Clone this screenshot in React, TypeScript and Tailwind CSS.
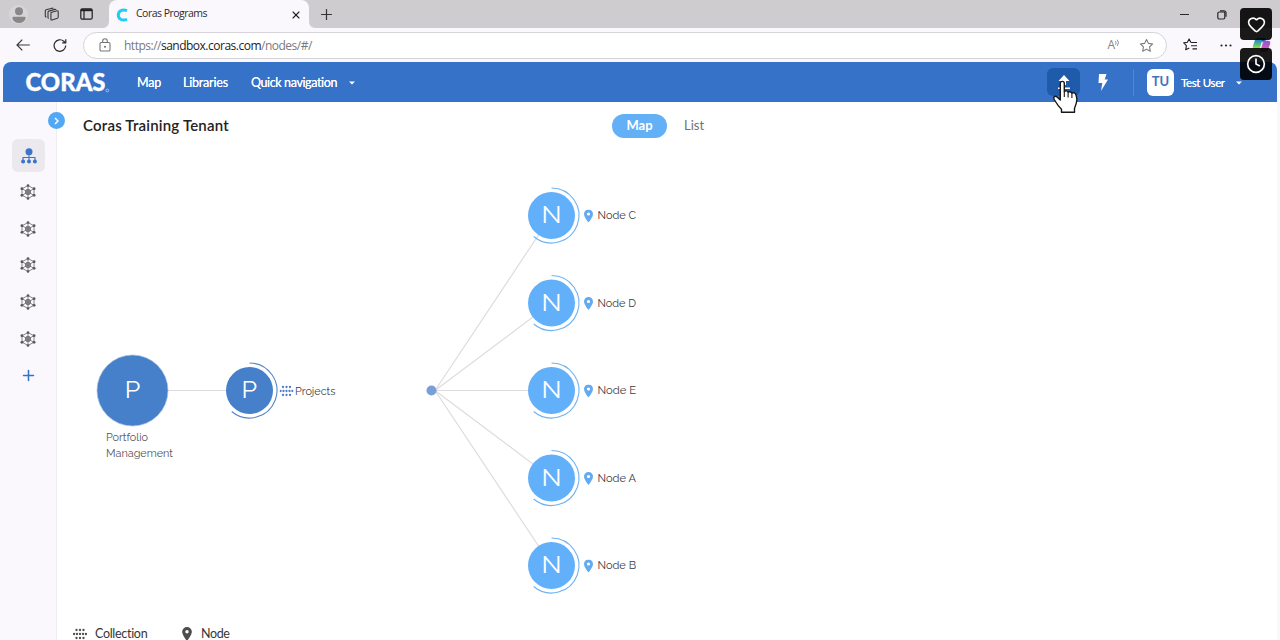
import React from 'react';
import { Clock, Heart, Plus, X } from 'lucide-react';

const children = [
  { name: 'Node C', y: 66.5 },
  { name: 'Node D', y: 154 },
  { name: 'Node E', y: 241.5 },
  { name: 'Node A', y: 329 },
  { name: 'Node B', y: 416.5 },
];

const CollectionIcon: React.FC<{ x?: number; y?: number; size?: number; color: string }> = ({ x, y, size = 14, color }) => {
  const dots = [
    [1.1, 7], [12.9, 7],
    [3.5, 3], [7, 3], [10.5, 3],
    [4, 7], [7, 7], [10, 7],
    [3.5, 11], [7, 11], [10.5, 11],
  ];
  return (
    <svg x={x} y={y} width={size} height={size} viewBox="0 0 14 14" fill={color}>
      {dots.map(([cx, cy]) => (
        <circle key={`${cx}-${cy}`} cx={cx} cy={cy} r="1.15" />
      ))}
    </svg>
  );
};

const PinIcon: React.FC<{ x?: number; y?: number; width?: number; height?: number; color: string }> = ({ x, y, width = 9, height = 13, color }) => (
  <svg x={x} y={y} width={width} height={height} viewBox="0 0 9 13">
    <path fillRule="evenodd" fill={color} d="M4.5 0A4.5 4.5 0 0 0 0 4.5C0 7.6 4.5 13 4.5 13S9 7.6 9 4.5A4.5 4.5 0 0 0 4.5 0Zm0 2.9a1.6 1.6 0 1 1 0 3.2 1.6 1.6 0 0 1 0-3.2Z" />
  </svg>
);

const NetworkIcon = () => (
  <svg width="16" height="16" viewBox="0 0 16 16" fill="none" stroke="#6a686d" strokeWidth="0.8">
    <path d="M8 1.6 14 4.7v6.6L8 14.4 2 11.3V4.7ZM8 1.6v12.8M2 4.7l12 6.6M14 4.7 2 11.3" />
    <circle cx="8" cy="8" r="2.7" fill="#8b898e" />
    <path d="M6.7 7.1h2.6M6.7 8.8h2.6" />
    <g fill="#58565b" stroke="none">
      <circle cx="8" cy="1.5" r="1.3" />
      <circle cx="8" cy="14.5" r="1.3" />
      <circle cx="1.9" cy="4.7" r="1.4" />
      <circle cx="14.1" cy="4.7" r="1.4" />
      <circle cx="1.9" cy="11.3" r="1.4" />
      <circle cx="14.1" cy="11.3" r="1.4" />
    </g>
  </svg>
);

const Caret = () => (
  <svg className="mt-[2px]" width="6" height="4" viewBox="0 0 6 4" fill="#fff">
    <path d="M0 0.5h6L3 3.5Z" />
  </svg>
);

const TabStrip = () => (
  <div className="flex h-7 items-center bg-[#cfcccf]">
    <div className="mt-px ml-[9px] flex h-[19px] w-[19px] items-center justify-center rounded-full bg-[#d8d5d8]">
      <svg width="14" height="16" viewBox="0 0 14 16" fill="#8a8789">
        <circle cx="7" cy="4.3" r="4" />
        <path d="M1.5 9.7h11c1 0 1.3.8 1 1.8C12.8 14.3 10.2 16 7 16S1.2 14.3.5 11.5c-.3-1 0-1.8 1-1.8Z" />
      </svg>
    </div>
    <svg className="mt-px ml-4" width="16" height="16" viewBox="0 0 16 16" fill="none" stroke="#3a383a" strokeWidth="1.1" strokeLinejoin="round">
      <path d="m7 5.5 6.2-1.7c.6-.1 1 .2 1 .7V10c0 .6-.3 1-.8 1.2L7.9 13c-.6.2-1-.1-1-.7Z" />
      <path d="M4.8 11.3c-.5.1-.8-.2-.8-.7V5.2c0-.6.3-1 .8-1.1L11 2.4c.5-.1.8 0 .9.6" />
      <path d="M2.5 9.8c-.7.2-1.2-.1-1.2-.8V3.9c0-.6.3-1 .8-1.1L8 1.2c.6-.1 1 0 1.1.6" />
    </svg>
    <svg className="ml-[20px]" width="13" height="12" viewBox="0 0 13 12" fill="none" stroke="#1f1d1f" strokeWidth="1.2">
      <rect x="0.8" y="0.8" width="11.4" height="10.4" rx="1.5" />
      <path d="M1 2.2h11" strokeWidth="2" />
      <path d="M4 3v8" />
    </svg>
    <div className="relative ml-4 flex h-7 w-[200px] items-center rounded-t-lg bg-[#faf8fc] pl-[7px] pr-[7px]">
      <svg className="absolute bottom-0 -left-[6px]" width="6" height="6" fill="#faf8fc"><path d="M6 0v6H0A6 6 0 0 0 6 0Z" /></svg>
      <svg className="absolute bottom-0 -right-[6px]" width="6" height="6" fill="#faf8fc"><path d="M0 0v6h6A6 6 0 0 1 0 0Z" /></svg>
      <svg className="mt-px" width="13" height="14" viewBox="0 0 13 14" fill="none" stroke="#1fcdf5" strokeWidth="3">
        <path d="M11 2.6C5.5.7 2.3 3.4 2.3 7s3.2 6.3 8.7 4.4" />
      </svg>
      <span className="ml-[7px] flex-1 whitespace-nowrap text-[10.5px] tracking-[-0.52px] text-[#2d2b2d]">Coras Programs</span>
      <X className="mt-px" size={12} strokeWidth={2.2} color="#222" />
    </div>
    <Plus className="ml-[9px]" size={17} strokeWidth={1.7} color="#333" />
    <div className="ml-auto flex items-center pr-[53px]">
      <div className="mt-px h-px w-[9px] bg-[#2a282a]" />
      <svg className="mt-px ml-[28px]" width="10" height="10" viewBox="0 0 10 10" fill="none" stroke="#2a282a" strokeWidth="1.2">
        <rect x="0.8" y="2" width="7" height="7" rx="1.5" />
        <path d="M3 .8h4a2 2 0 0 1 2 2v4" />
      </svg>
    </div>
  </div>
);

const AddressBar = () => (
  <div className="flex h-[34px] items-center bg-[#faf8fc]">
    <svg className="ml-4" width="14" height="12" viewBox="0 0 14 12" fill="none" stroke="#3b393b" strokeWidth="1.2">
      <path d="M13.8 6H1M6.3.6 1 6l5.3 5.4" />
    </svg>
    <svg className="ml-[23px]" width="14" height="15" viewBox="0 0 15 15" fill="none" stroke="#2b292b" strokeWidth="1.3">
      <path d="M13.6 7.5a6.2 6.2 0 1 1-2-4.5l1.7 1.6" />
      <path d="M13.7.8v4H9.8" />
    </svg>
    <div className="ml-4 flex h-[27px] w-[1084px] items-center rounded-full border border-[#d6d3d8] bg-white pr-[12px] pl-[15px]">
      <svg width="12" height="14" viewBox="0 0 12 14" fill="none" stroke="#777" strokeWidth="1.1">
        <rect x="1" y="4.5" width="10" height="8.5" rx="1.3" />
        <path d="M3.7 4.3V3a2.3 2.3 0 0 1 4.6 0v1.3" />
        <circle cx="6" cy="8.7" r="0.5" fill="#555" />
      </svg>
      <span className="mt-px ml-[13px] flex-1 whitespace-nowrap text-[12px] tracking-[-0.5px] text-[#7b797c]">
        https://<span className="text-[#242225]">sandbox.coras.com</span>/nodes/#/
      </span>
      <span className="text-[12px] text-[#858386]">A</span>
      <svg className="mb-[5px]" width="5" height="8" viewBox="0 0 5 8" fill="none" stroke="#858386" strokeWidth="0.9">
        <path d="M0.5 2.2q1.3 1.6 0 3.5M2.2.7q2.6 3 0 6.3" />
      </svg>
      <svg className="ml-[19px]" width="15" height="15" viewBox="0 0 24 24" fill="none" stroke="#777578" strokeWidth="1.7" strokeLinejoin="round">
        <path d="m12 2.3 3 6.3 6.9.9-5 4.8 1.2 6.9-6.1-3.4-6.1 3.4 1.2-6.9-5-4.8 6.9-.9Z" />
      </svg>
    </div>
    <svg className="ml-[16px]" width="15" height="14" viewBox="0 0 15 14" fill="none" stroke="#222022" strokeWidth="1.1" strokeLinejoin="round">
      <path d="M9 4.5 7.8 4.3 6.1.9 4.4 4.3.7 4.9l2.7 2.7-.7 4.2 3.6-1.9" />
      <path d="M8.5 4.5H14M8 7.7h6M9.5 10.9H14" />
    </svg>
    <svg className="ml-[22px]" width="12" height="3" viewBox="0 0 12 3" fill="#2a282a">
      <circle cx="1.5" cy="1.5" r="1.1" />
      <circle cx="6" cy="1.5" r="1.1" />
      <circle cx="10.5" cy="1.5" r="1.1" />
    </svg>
    <svg className="ml-[20px]" width="19" height="16" viewBox="0 0 19 16">
      <defs>
        <linearGradient id="copilot-left" x1="0" y1="0" x2="0" y2="1">
          <stop offset="0" stopColor="#1b72d8" />
          <stop offset="0.6" stopColor="#4fc27c" />
          <stop offset="1" stopColor="#e8cf36" />
        </linearGradient>
        <linearGradient id="copilot-right" x1="0" y1="0" x2="0" y2="1">
          <stop offset="0" stopColor="#8d52df" />
          <stop offset="1" stopColor="#f2609b" />
        </linearGradient>
      </defs>
      <path d="M6 1h5L8 10.5c-.4 1.2-1 1.8-2.3 1.8H3C.8 12.3.4 10.7 1 8.8L2.8 3.5C3.4 1.8 4.4 1 6 1Z" fill="url(#copilot-left)" />
      <path d="M13 15H8l3-9.5c.4-1.2 1-1.8 2.3-1.8H16c2.2 0 2.6 1.6 2 3.5l-1.8 5.3c-.6 1.7-1.6 2.5-3.2 2.5Z" fill="url(#copilot-right)" />
      <path d="M8 1h4c1 0 1.5 1 1.9 2.7-2 0-2.6.6-3 1.8Z" fill="#2256b9" />
    </svg>
  </div>
);

const NavBar = () => (
  <nav className="flex h-10 shrink-0 items-center rounded-t-lg bg-[#3572c8] text-white">
    <svg className="ml-[22px] overflow-visible" width="86" height="36" fill="#fff">
      <text x="0.5" y="27" textLength="80" lengthAdjust="spacingAndGlyphs" stroke="#fff" strokeWidth="0.4" className="font-['Lato'] text-[25.5px] font-black">CORAS</text>
      <circle cx="82.3" cy="26.5" r="1.4" fill="none" stroke="#fff" strokeWidth="0.5" />
    </svg>
    <span className="mt-[3px] ml-[26px] w-[46px] text-[12.5px] tracking-[-0.25px] [text-shadow:0_0_0.5px_#fff]">Map</span>
    <span className="mt-[3px] w-[68px] text-[12.5px] tracking-[-0.2px] [text-shadow:0_0_0.5px_#fff]">Libraries</span>
    <span className="mt-[3px] w-[98px] whitespace-nowrap text-[12.5px] tracking-[-0.38px] [text-shadow:0_0_0.5px_#fff]">Quick navigation</span>
    <Caret />
    <div className="ml-auto flex h-7 w-[33px] items-center justify-center rounded-md bg-[#205aaa]">
      <svg width="12" height="15" viewBox="0 0 12 15" fill="#fff">
        <path d="M6 0l5.5 6H8v4H4V6H.5ZM0 12.5h12V14H0Z" />
      </svg>
    </div>
    <svg className="ml-[18px]" width="10" height="17" viewBox="0 0 10 17" fill="#fff">
      <path d="M1 0h7.5L6.7 5.5H10L3 17l1.3-8H.5Z" />
    </svg>
    <div className="ml-[25px] h-[27px] w-px bg-[#5288d2]" />
    <div className="ml-[13px] flex h-[27px] w-[27px] items-center justify-center rounded-md bg-white text-[13px] font-bold text-[#3f73bd]">TU</div>
    <span className="mt-px ml-[7px] w-[55px] whitespace-nowrap text-[11.5px] tracking-[-0.36px] [text-shadow:0_0_0.5px_#fff]">Test User</span>
    <Caret />
    <div className="w-[35px]" />
  </nav>
);

const Sidebar = () => (
  <aside className="relative flex w-[54px] shrink-0 flex-col items-center border-r border-[#f0edf3] bg-[#faf8fc] pr-[2px] pt-[37px]">
    <button className="absolute top-[10px] -right-[9px] flex h-[17px] w-[17px] items-center justify-center rounded-full bg-[#51a8f6]">
      <svg width="5" height="8" viewBox="0 0 5 8" fill="none" stroke="#fff" strokeWidth="1.5"><path d="M1 1l3 3-3 3" /></svg>
    </button>
    <div className="flex h-[33px] w-[33px] items-center justify-center rounded-md bg-[#ebe9ed]">
      <svg width="16" height="16" viewBox="0 0 16 16" fill="#3b74cb">
        <circle cx="8" cy="3.7" r="3.5" />
        <path d="M2 12V9.5h12V12M8 6v7" fill="none" stroke="#3b74cb" strokeWidth="1.1" />
        <circle cx="2.1" cy="13.4" r="2" />
        <circle cx="8" cy="13.4" r="2" />
        <circle cx="13.9" cy="13.4" r="2" />
      </svg>
    </div>
    <div className="mt-[12px] mr-px flex flex-col gap-[20.7px]">
      {[1, 2, 3, 4, 5].map((n) => (
        <NetworkIcon key={n} />
      ))}
    </div>
    <Plus className="mt-[20px]" size={17} strokeWidth={2.2} color="#3572c8" />
  </aside>
);

const NodeMap = () => (
  <svg className="block h-[471px] w-full shrink-0 font-['Raleway','Open_Sans',sans-serif]" fill="none">
    <g stroke="#dedcde" strokeWidth="1.2">
      <path d="M111 241.5h58" />
      {children.map((node) => (
        <path key={node.name} d={`M378 241.5 L494.5 ${node.y}`} />
      ))}
    </g>
    <circle cx="374.5" cy="241.5" r="5" fill="#799fda" />

    <circle cx="75.5" cy="241.5" r="35.5" fill="#4680cb" stroke="#a9bddb" strokeWidth="0.7" />
    <text x="67.8" y="248.5" textLength="15.5" lengthAdjust="spacingAndGlyphs" className="text-[24px]" fill="#fff">P</text>
    <text x="49" y="292" textLength="42" lengthAdjust="spacingAndGlyphs" className="text-[11.5px]" fill="#565456">Portfolio</text>
    <text x="49" y="308" textLength="67" lengthAdjust="spacingAndGlyphs" className="text-[11.5px]" fill="#565456">Management</text>

    <circle cx="192.5" cy="241.5" r="23.5" fill="#4680cb" />
    <path d="M192.5 214a27.5 27.5 0 1 1-17.8 48.5" stroke="#5486cc" strokeWidth="1.1" />
    <text x="184.5" y="248.5" textLength="15.5" lengthAdjust="spacingAndGlyphs" className="text-[24px]" fill="#fff">P</text>
    <CollectionIcon x={222.5} y={235} size={14} color="#4c7fc9" />
    <text x="238" y="246" textLength="40.5" lengthAdjust="spacingAndGlyphs" className="text-[11.5px]" fill="#454345">Projects</text>

    {children.map((node) => (
      <g key={node.name} transform={`translate(494.5 ${node.y})`}>
        <circle r="23.5" fill="#63b0fa" />
        <path d="M0 -27.5a27.5 27.5 0 1 1-17.8 48.5" stroke="#6fb2f2" strokeWidth="1.1" />
        <text x="-10" y="7.5" textLength="20" lengthAdjust="spacingAndGlyphs" className="text-[24px]" fill="#fff">N</text>
        <PinIcon x={32.5} y={-6} color="#63aaf0" />
        <text x="46" y="3.9" textLength="38.5" lengthAdjust="spacingAndGlyphs" className="text-[11.5px]" fill="#3d3b3d">{node.name}</text>
      </g>
    ))}
  </svg>
);

const HandCursor = () => (
  <svg className="absolute top-[80px] left-[1052px]" width="27" height="34" viewBox="0 0 27 34">
    <path
      d="M8.3 3.5c0-2.8 4-2.8 4 0v8.3c.5-1.4 3.5-1.2 3.8.7.7-1.3 3.4-.9 3.8.9.9-1.2 3.8-.6 4 1.5.6 1.9 1.1 2.5.9 4.8-.2 4.5-1.5 6-2.3 8.5v4H9.5v-3C6.5 26.5 4.5 23.5 2.2 19.5c-1.5-2.7.9-4.2 2.9-2.5l3.2 3Z"
      fill="#fff"
      stroke="#171717"
      strokeWidth="1.4"
      strokeLinejoin="round"
    />
    <path d="M12.3 12v5M16.1 13v4.5M19.9 14v4" stroke="#171717" strokeWidth="1.1" />
  </svg>
);

const App: React.FC = () => {
  return (
    <div className="relative flex h-[640px] w-[1280px] flex-col overflow-hidden bg-[#faf8fc] font-['Lato','Open_Sans',sans-serif]">
      <div className="shrink-0 font-['Open_Sans','Noto_Sans',sans-serif]">
        <TabStrip />
        <AddressBar />
      </div>

      <div className="mx-[3px] flex min-h-0 flex-1 flex-col">
        <NavBar />
        <div className="flex min-h-0 flex-1">
          <Sidebar />
          <main className="flex flex-1 flex-col bg-white">
            <header className="flex h-[47px] shrink-0 items-center pl-[26px]">
              <h1 className="w-[529px] text-[15px] font-semibold tracking-[0.2px] text-[#232123]">Coras Training Tenant</h1>
              <button className="flex h-6 w-[55px] items-center justify-center rounded-full bg-[#63b0f7] text-[13px] font-bold text-white">Map</button>
              <button className="ml-[17px] text-[13px] text-[#737173]">List</button>
            </header>
            <NodeMap />
            <footer className="flex h-[28px] shrink-0 items-center pl-[16px] text-[12.5px] text-[#373537]">
              <CollectionIcon color="#4e4c4e" />
              <span className="ml-[8px] w-[87px] tracking-[-0.3px]">Collection</span>
              <PinIcon width={10} height={14} color="#4e4c4e" />
              <span className="ml-[9px] tracking-[-0.4px]">Node</span>
            </footer>
          </main>
        </div>
      </div>

      <HandCursor />
      <div className="absolute top-2 right-2 flex flex-col gap-2">
        <div className="flex h-8 w-8 items-center justify-center rounded bg-black/90">
          <Heart size={19} color="#fff" />
        </div>
        <div className="flex h-8 w-8 items-center justify-center rounded bg-black/90">
          <Clock size={20} color="#fff" />
        </div>
      </div>
    </div>
  );
};

export default App;
